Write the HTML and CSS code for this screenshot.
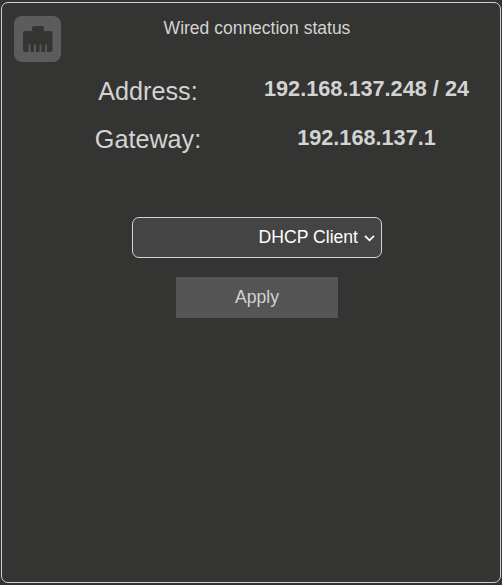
FILE: index.html
```
<!DOCTYPE html>
<html lang="en">
<head>
<meta charset="utf-8">
<title>Wired connection status</title>
<link rel="stylesheet" href="styles.css">
</head>
<body>
<main class="panel">
  <header class="head">
    <svg class="icon" viewBox="0 0 47 46" aria-hidden="true">
      <rect width="47" height="46" rx="8" fill="#5c5c5c"/>
      <path fill="#343432" d="M20 10h8q2 0 2 2v3h6q2.500 0 2.500 2.500v16q0 2.500-2.500 2.500H11.500q-2.500 0-2.500-2.500v-16q0-2.500 2.500-2.500H18v-3q0-2 2-2z"/>
      <path stroke="#585858" stroke-width="2" d="M15.500 28.500v7.500M21 28.500v7.500M26.500 28.500v7.500M32 28.500v7.500"/>
    </svg>
    <h1 class="title">Wired connection status</h1>
  </header>
  <dl class="info">
    <dt>Address:</dt><dd>192.168.137.248 / 24</dd>
    <dt>Gateway:</dt><dd class="gateway">192.168.137.1</dd>
  </dl>
  <button class="select" type="button">
    <span>DHCP Client</span>
    <svg class="chevron" viewBox="0 0 11 7" aria-hidden="true"><path d="M1 .9 5.500 5.400 10 .9"/></svg>
  </button>
  <button class="apply" type="button">Apply</button>
</main>
</body>
</html>
```
FILE: styles.css
```
* { box-sizing: border-box; }
body {
  margin: 0;
  background: #343432;
  color: #d3d3d3;
  font: 17.6px/20px "Liberation Sans", Arial, sans-serif;
}
.panel {
  width: 500px;
  height: 581px;
  margin: 2px 1px 0;
  border: 1px solid #cfcde0;
  border-radius: 7px;
  display: flex;
  flex-direction: column;
}
.head {
  display: grid;
  grid-template-columns: 47px 1fr 47px;
  padding: 13px 0 0 12px;
  height: 64px;
}
.icon { width: 47px; height: 46px; }
.title {
  margin: 2px 0 0;
  font-size: 17.5px;
  font-weight: normal;
  text-align: center;
}
.info {
  display: grid;
  grid-template-columns: 250px 229px;
  grid-template-rows: 48px 48px;
  margin: 0;
}
dt { padding-left: 42px; font-size: 25.2px; line-height: 48px; text-align: center; }
dd { margin: 0; font-size: 21.7px; line-height: 43px; font-weight: bold; text-align: center; white-space: nowrap; }
.gateway { line-height: 46px; }
.select {
  display: flex;
  align-items: center;
  justify-content: flex-end;
  gap: 6px;
  width: 250px;
  height: 41px;
  margin: 54px 0 0 130px;
  padding: 0 6px 1px 0;
  border: 1px solid #d3d3d3;
  border-radius: 7px;
  background: #444;
  color: #fff;
  font: inherit;
}
.chevron { width: 11px; height: 7px; fill: none; stroke: #fff; stroke-width: 1.7; margin-top: 2px; }
.apply {
  width: 162px;
  height: 41px;
  margin: 19px 0 0 174px;
  padding: 0 0 1px;
  border: 0;
  background: #555;
  color: #d3d3d3;
  font: inherit;
}
```
